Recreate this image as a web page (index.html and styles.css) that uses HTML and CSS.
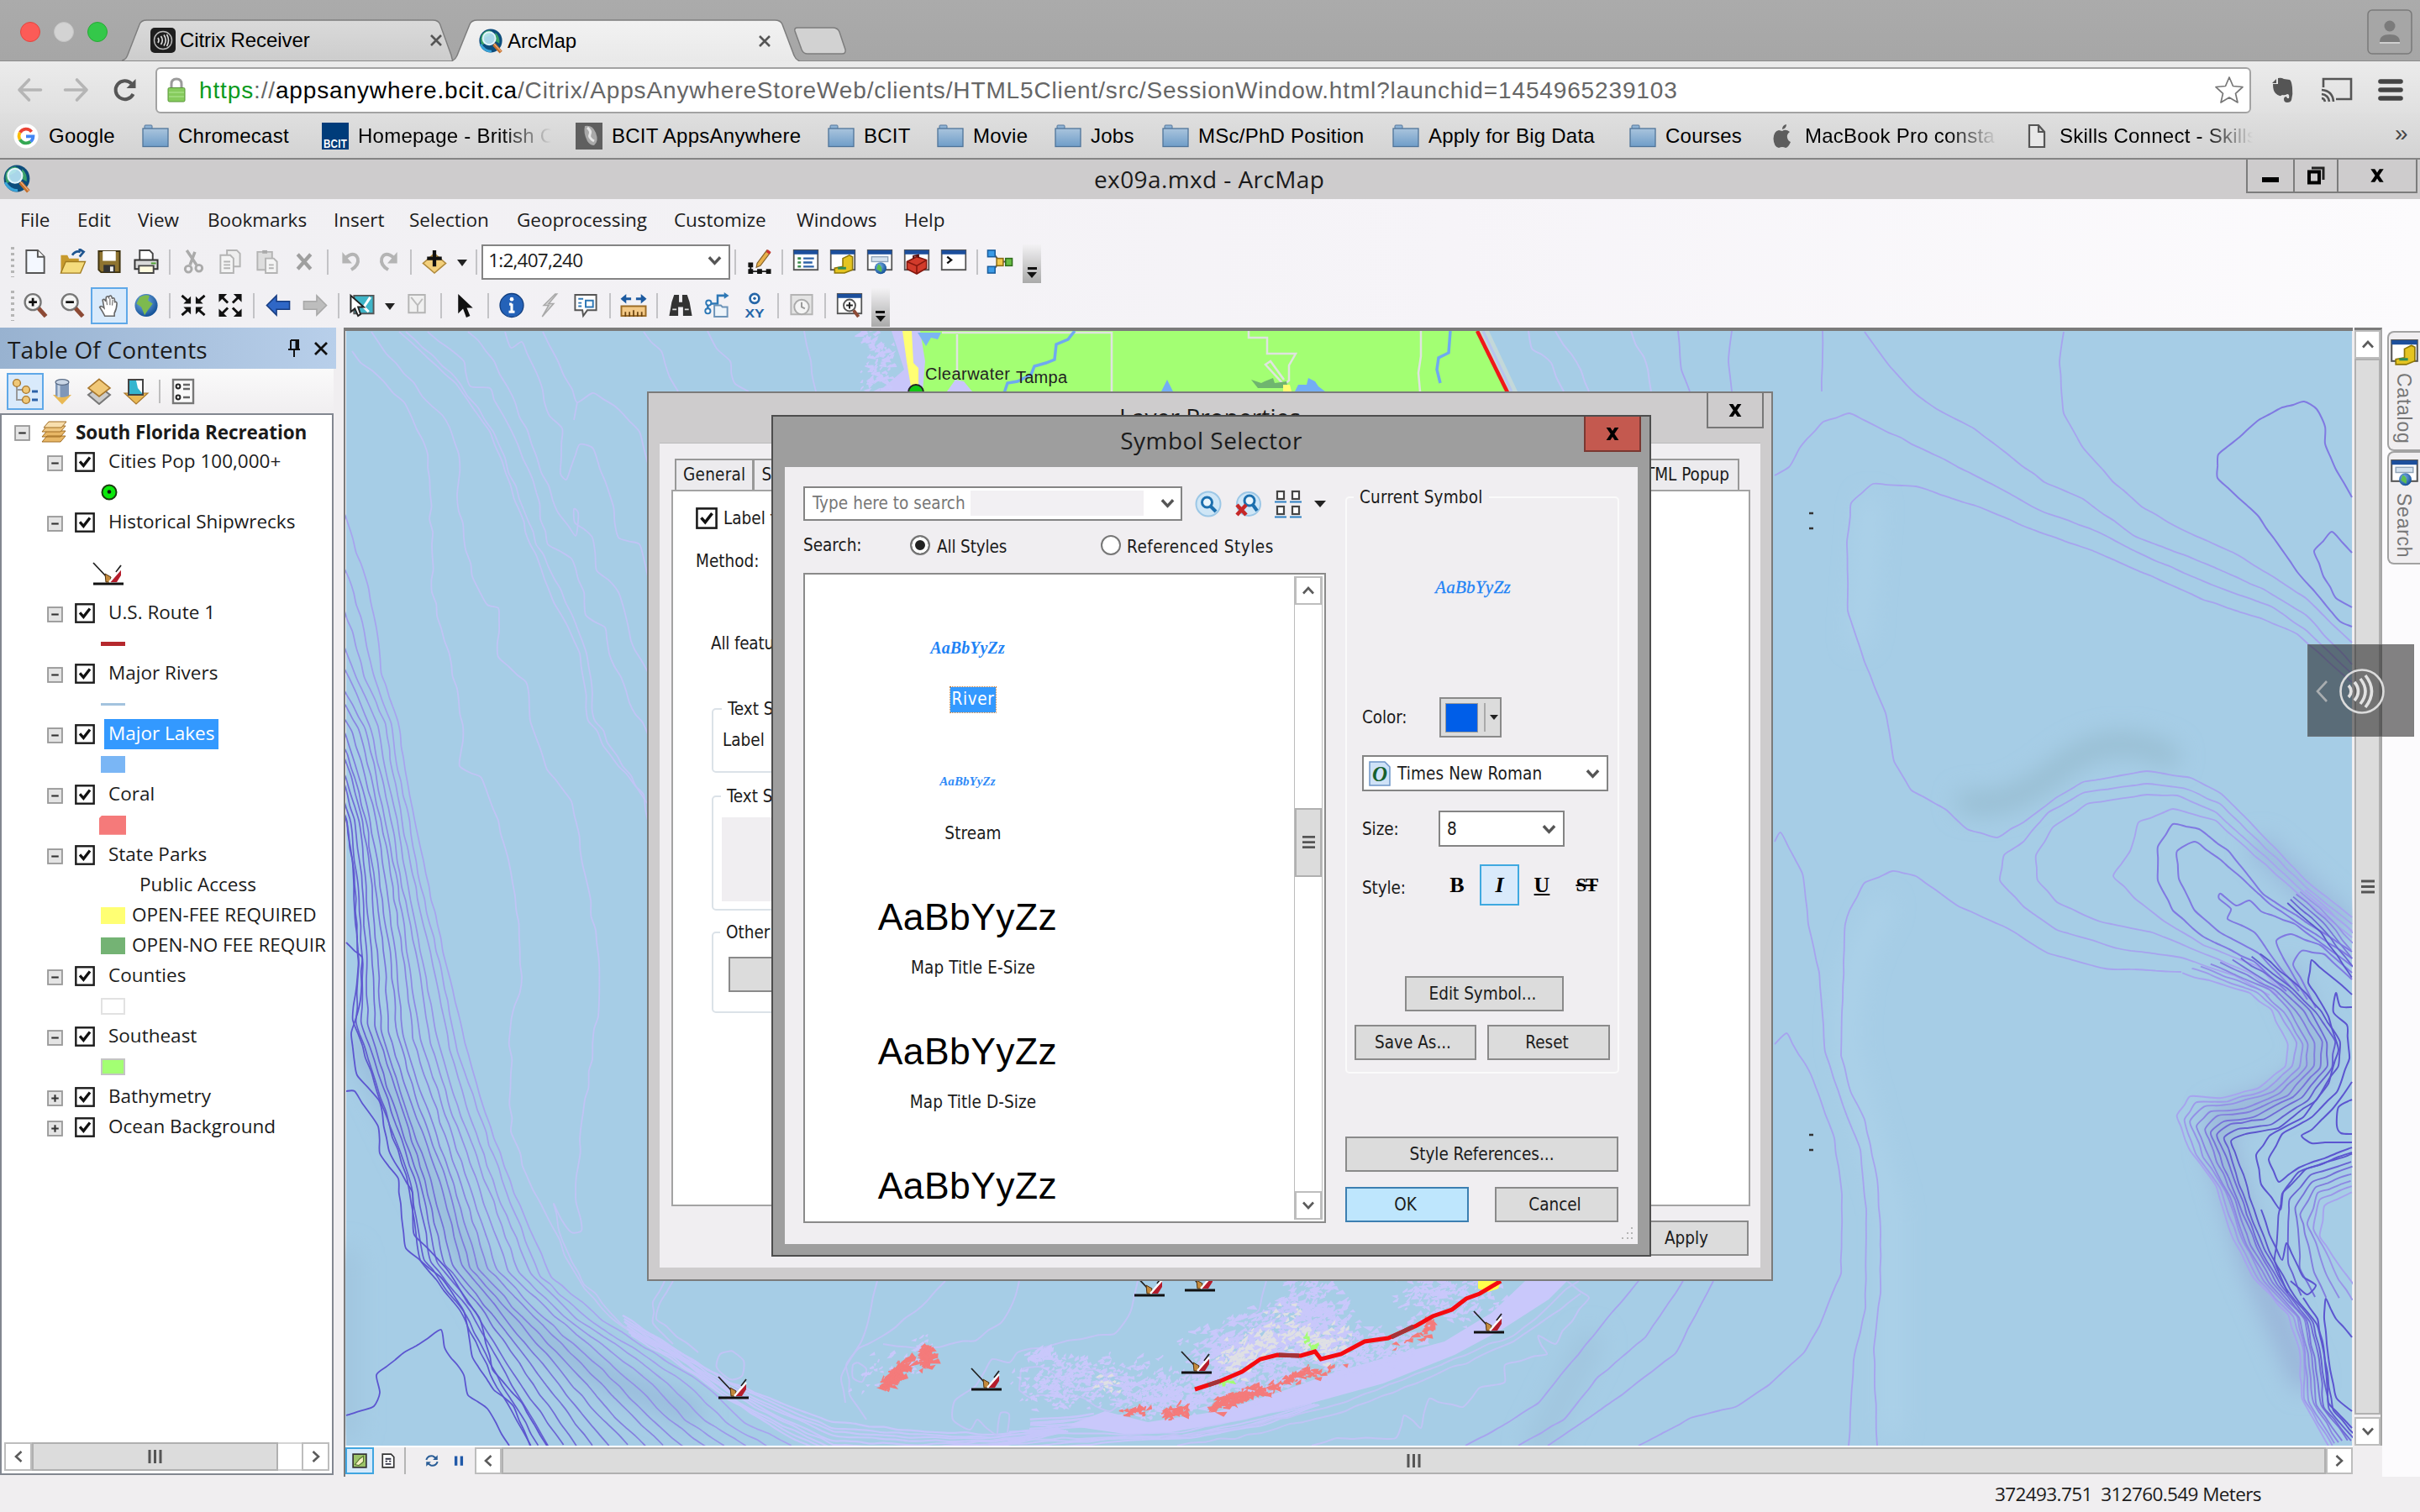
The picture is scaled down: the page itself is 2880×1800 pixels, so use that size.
FILE: index.html
```html
<!DOCTYPE html>
<html lang="en">
<head>
<meta charset="utf-8">
<title>ArcMap</title>
<link rel="stylesheet" href="styles.css">
</head>
<body>
<svg class="defs" width="0" height="0">
  <defs>
    <linearGradient id="folderFill" x1="0" y1="0" x2="0" y2="1"><stop offset="0" stop-color="#a9c4dd"/><stop offset="1" stop-color="#6f9dc8"/></linearGradient>
    <linearGradient id="tabBack" x1="0" y1="0" x2="0" y2="1"><stop offset="0" stop-color="#dadada"/><stop offset="1" stop-color="#cdcdcd"/></linearGradient>
    <linearGradient id="tabFront" x1="0" y1="0" x2="0" y2="1"><stop offset="0" stop-color="#f2f2f2"/><stop offset="1" stop-color="#e9e9e9"/></linearGradient>
    <radialGradient id="globeFill" cx=".4" cy=".35" r=".7"><stop offset="0" stop-color="#7fb4ea"/><stop offset="1" stop-color="#0b4a91"/></radialGradient>
    <symbol id="folder" viewBox="0 0 32 28"><path d="M3 5V2q0-1 1-1h7q1 0 1 1v3" fill="#8fb2d4" stroke="#56799c"/><rect x="1" y="5" width="30" height="21.500" fill="url(#folderFill)" stroke="#4f7499" stroke-width="1.300"/></symbol>
    <symbol id="arcmap" viewBox="0 0 32 32"><ellipse cx="16" cy="15.500" rx="14.500" ry="15" fill="#0d4d7c"/><path d="M4 9q3-6 10-7l4 2-4 5-6 3 2 6-5 3q-3-5-1-12zM22 5q6 5 5 14l-5-3-1-6z" fill="#39a06a"/><path d="M3 20q5 9 14 9" fill="none" stroke="#3aa3d8" stroke-width="3"/><circle cx="14" cy="12.500" r="8" fill="#bfe9f8" fill-opacity=".88" stroke="#e3f4fb" stroke-width="2"/><path d="M20 20l9 10" stroke="#c4702b" stroke-width="4.500"/><path d="M20 19l9 10" stroke="#f3b183" stroke-width="1.200"/></symbol>
    <symbol id="win" viewBox="0 0 16 16"><rect x=".6" y="1" width="14.800" height="12" fill="#fff" stroke="#555"/><rect x=".6" y="1" width="14.800" height="2.500" fill="#1c4f9c"/></symbol>
    <symbol id="minus" viewBox="0 0 18 18"><rect x="1" y="1" width="16" height="16" fill="#e4e4e4" stroke="#9b9b9b" stroke-width="1.800"/><path d="M5 9h8" stroke="#333" stroke-width="2"/></symbol>
    <symbol id="plus" viewBox="0 0 18 18"><rect x="1" y="1" width="16" height="16" fill="#e4e4e4" stroke="#9b9b9b" stroke-width="1.800"/><path d="M5 9h8M9 5v8" stroke="#333" stroke-width="2"/></symbol>
    <symbol id="check" viewBox="0 0 22 22"><rect x="1.200" y="1.200" width="19.600" height="19.600" fill="#fff" stroke="#1c1c1c" stroke-width="2.200"/><path d="M5.500 10.500l4 4.500 7-9" fill="none" stroke="#111" stroke-width="3"/></symbol>
    <symbol id="wreck" viewBox="0 0 38 28"><path d="M1 26h36" stroke="#111" stroke-width="3"/><path d="M1 1l17 18M28 12l6-8" stroke="#222" stroke-width="1.800"/><path d="M15 14l7 4-1 6h-5z" fill="#c48a3c" stroke="#50330f"/><path d="M21 24L34 9v7l-5 8z" fill="#b51d2c"/><path d="M20 24L34 8" stroke="#fff" stroke-width="2.400"/></symbol>
    <symbol id="down" viewBox="0 0 18 12"><path d="M2 2l7 7.500L16 2" fill="none" stroke="#555" stroke-width="3.600"/></symbol>
    <symbol id="chev" viewBox="0 0 16 16"><path d="M2 11.500L8 5l6 6.500" fill="none" stroke="#5b5b5b" stroke-width="2.600"/></symbol>
    <symbol id="lens" viewBox="0 0 16 16"><circle cx="6.500" cy="6" r="4.900" fill="#f4f4f4" stroke="#777" stroke-width="1.200"/><path d="M10 9.800l4.500 5" stroke="#8d4a35" stroke-width="2.600"/></symbol>
    <symbol id="xmark" viewBox="0 0 20 18"><path d="M3 2h4.500L10 5.800 12.500 2H17l-4.800 7L17 16h-4.500L10 12.200 7.500 16H3l4.800-7z" fill="#000"/></symbol>
  </defs>
</svg>

<header class="chrome">
  <div class="tabstrip">
    <div class="lights"><i class="red"></i><i class="gray"></i><i class="green"></i></div>
    <div class="tab back">
      <svg class="tabshape" viewBox="0 0 412 50" preserveAspectRatio="none"><path d="M0 49Q5 48 7 43L22 6Q24 1 31 1H387Q394 1 396 6L410 43Q411 48 412 49" fill="url(#tabBack)" stroke="#7d7d7d" stroke-width="1.500"/></svg>
      <svg class="fav" viewBox="0 0 30 30"><rect width="30" height="30" rx="5" fill="#1e1e1e"/><circle cx="15" cy="15" r="10.500" fill="none" stroke="#bbb" stroke-width="1.400"/><path d="M9 12q2 3 0 6M12.500 10q3.500 5 0 10M16 8.500q4.500 6.500 0 13M19.500 8q4 7 0 14" fill="none" stroke="#ddd" stroke-width="1.600"/></svg>
      <span class="name">Citrix Receiver</span>
      <svg class="x" viewBox="0 0 14 14"><path d="M1 1l12 12M13 1L1 13" stroke="#555" stroke-width="2.600"/></svg>
    </div>
    <div class="tab front">
      <svg class="tabshape" viewBox="0 0 415 50" preserveAspectRatio="none"><path d="M0 50Q5 48 7 43L22 6Q24 1 31 1H385Q392 1 394 6L408 43Q410 48 415 50" fill="url(#tabFront)" stroke="#7d7d7d" stroke-width="1.500"/></svg>
      <svg class="fav"><use href="#arcmap"/></svg>
      <span class="name">ArcMap</span>
      <svg class="x" viewBox="0 0 14 14"><path d="M1 1l12 12M13 1L1 13" stroke="#555" stroke-width="2.600"/></svg>
    </div>
    <svg class="newtab" viewBox="0 0 64 33"><path d="M5 1H47Q53 1 55 6L62 27Q63 32 58 32H17Q12 32 10 27L2 5Q1 1 5 1z" fill="#d2d2d2" stroke="#7d7d7d" stroke-width="1.500"/></svg>
    <svg class="person" viewBox="0 0 54 54"><rect x="1" y="1" width="52" height="52" rx="5" fill="#a6a6a6" stroke="#7a7a7a" stroke-width="1.500"/><circle cx="27" cy="20" r="6.500" fill="#7b7b7b"/><path d="M15 39q0-9 12-9t12 9z" fill="#7b7b7b"/><path d="M15 40h24" stroke="#ddd" stroke-width="1.500"/></svg>
  </div>
  <div class="addressbar">
    <svg class="nav" viewBox="0 0 30 30"><path d="M28 15H3M14 3L2.500 15 14 27" fill="none" stroke="#b5b5b5" stroke-width="3.600" stroke-linecap="round" stroke-linejoin="round"/></svg>
    <svg class="nav fwd" viewBox="0 0 30 30"><path d="M2 15h25M16 3l11.500 12L16 27" fill="none" stroke="#b5b5b5" stroke-width="3.600" stroke-linecap="round" stroke-linejoin="round"/></svg>
    <svg class="nav reload" viewBox="0 0 30 30"><path d="M25 20A11 11 0 1 1 23 7.500" fill="none" stroke="#555" stroke-width="4"/><path d="M28 2v11H17z" fill="#555"/></svg>
    <div class="url">
      <svg class="lock" viewBox="0 0 22 30"><path d="M5 14V8q0-6 6-6t6 6v6" fill="none" stroke="#9b9b9b" stroke-width="3"/><rect x="1" y="12.500" width="20" height="16.500" rx="1.500" fill="#86cb5d" stroke="#58953a"/><path d="M2 18h18M2 23h18" stroke="#a5de84" stroke-width="1.500"/></svg>
      <span class="addr"><b class="sec">https</b>://<b class="host">appsanywhere.bcit.ca</b>/Citrix/AppsAnywhereStoreWeb/clients/HTML5Client/src/SessionWindow.html?launchid=1454965239103</span>
      <svg class="star" viewBox="0 0 36 34"><path d="M18 2l4.500 10.500L34 13.500l-8.500 7.800L28 32l-10-6-10 6 2.500-10.700L2 13.500l11.500-1z" fill="#fff" stroke="#777" stroke-width="1.700" stroke-linejoin="round"/></svg>
    </div>
    <svg class="ext ever" viewBox="0 0 27 30"><path d="M8 1q4-1 7 1l7 1q2 1 3 9t-1 15q-1 3-5 3t-4-4q0-3 3-3l1 2h2q1-5-2-5-3 2-6 1-3 3-8-2-3-3-3-11h6z" fill="#555"/><path d="M1 7l5-5v5z" fill="#555"/></svg>
    <svg class="ext cast" viewBox="0 0 38 30"><path d="M3 12V2H36V26H18" fill="none" stroke="#555" stroke-width="2.600"/><path d="M1 15q13 1 14 14M1 20q8 1 9 9M1 25q3 0 4 4" fill="none" stroke="#555" stroke-width="2.600"/></svg>
    <svg class="ext menu" viewBox="0 0 30 28"><path d="M3 4h24M3 14h24M3 24h24" stroke="#444" stroke-width="5.600" stroke-linecap="round"/></svg>
  </div>
  <nav class="bookmarks">
    <a><svg viewBox="0 0 32 32"><circle cx="16" cy="16" r="15.500" fill="#fff"/><path d="M23 10.500A9 9 0 0 0 8.300 11.500" fill="none" stroke="#ea4335" stroke-width="4"/><path d="M8.300 11.500A9 9 0 0 0 8.300 20.500" fill="none" stroke="#fbbc05" stroke-width="4"/><path d="M8.300 20.500A9 9 0 0 0 21.800 23" fill="none" stroke="#34a853" stroke-width="4"/><path d="M16 16.500h9A9 9 0 0 1 21.800 23" fill="none" stroke="#4285f4" stroke-width="4"/></svg><span>Google</span></a>
    <a><svg><use href="#folder"/></svg><span>Chromecast</span></a>
    <a><svg class="full" viewBox="0 0 32 32"><rect width="32" height="32" fill="#003c7a"/><text x="2" y="30" class="bcit" textLength="28" lengthAdjust="spacingAndGlyphs">BCIT</text></svg><span class="fade">Homepage - British C</span></a>
    <a><svg class="full" viewBox="0 0 32 32"><rect width="32" height="32" fill="#5f5f5f"/><path d="M11 4q9-2 13 8t-2 15q-5 0-8-5Q9 12 11 4z" fill="#a9a9a9"/><path d="M14 6q5 4 3 8t5 8" stroke="#e6e6e6" stroke-width="3" fill="none"/></svg><span>BCIT AppsAnywhere</span></a>
    <a><svg><use href="#folder"/></svg><span>BCIT</span></a>
    <a><svg><use href="#folder"/></svg><span>Movie</span></a>
    <a><svg><use href="#folder"/></svg><span>Jobs</span></a>
    <a><svg><use href="#folder"/></svg><span>MSc/PhD Position</span></a>
    <a><svg><use href="#folder"/></svg><span>Apply for Big Data</span></a>
    <a><svg><use href="#folder"/></svg><span>Courses</span></a>
    <a><svg viewBox="0 0 32 28"><path d="M16 8q4-3 9 1-4 3-3 7 1 4 4 5-3 7-6 7-2-1-4-1t-4 1q-6-1-6.500-11Q6 8 12 7z" fill="#5d5d5d"/><path d="M16 6q0-5 5-6 0 5-5 6z" fill="#5d5d5d"/></svg><span class="fade">MacBook Pro consta</span></a>
    <a><svg viewBox="0 0 32 28"><path d="M7 1H18l7 8V27H7zM18 1v8h7" fill="#e8e8e8" stroke="#555" stroke-width="2.200"/></svg><span class="fade">Skills Connect - Skills</span></a>
    <b class="more">»</b>
  </nav>
</header>

<main class="app">
  <div class="titlebar">
    <svg class="appicon"><use href="#arcmap"/></svg>
    <h1>ex09a.mxd - ArcMap</h1>
    <div class="winbtns">
      <span><svg width="22" height="20" viewBox="0 0 22 20"><path d="M1 15h20" stroke="#000" stroke-width="6"/></svg></span>
      <span><svg width="22" height="22" viewBox="0 0 22 22"><path d="M6 2h14v14" fill="none" stroke="#222" stroke-width="3"/><rect x="3" y="6.500" width="12" height="13" fill="none" stroke="#000" stroke-width="4"/></svg></span>
      <span><svg width="22" height="20"><use href="#xmark"/></svg></span>
    </div>
  </div>
  <nav class="menubar"><span>File</span><span>Edit</span><span>View</span><span>Bookmarks</span><span>Insert</span><span>Selection</span><span>Geoprocessing</span><span>Customize</span><span>Windows</span><span>Help</span></nav>

  <div class="toolbar one">
    <i class="grip"></i>
    <svg viewBox="0 0 16 16"><path d="M2.500 1h7l4 4v10h-11z" fill="#f4f8ff" stroke="#555"/><path d="M9.500 1v4h4" fill="#fff" stroke="#555"/></svg>
    <svg viewBox="0 0 16 16"><path d="M1 15V4h4l1 2h6v9z" fill="#c79a2d"/><path d="M1 15l3-7h12l-3 7z" fill="#f5dc7d" stroke="#a17b1e" stroke-width=".7"/><path d="M8 4q2-3 5-2M12 0l3 2-2.500 3" fill="none" stroke="#1e5590" stroke-width="1.400"/></svg>
    <svg viewBox="0 0 16 16"><path d="M1.500 1.500h13v13H3l-1.500-1.500z" fill="#8f7430" stroke="#3f3310"/><rect x="4" y="1.500" width="8" height="6" fill="#fff"/><path d="M4.500 10h7v4.500h-7z" fill="#333"/><rect x="8.500" y="11" width="2" height="3" fill="#eee"/></svg>
    <svg viewBox="0 0 16 16"><path d="M4 8V1h6l2 2v5z" fill="#fff" stroke="#444"/><path d="M1 7h14v5.500H1z" fill="#d9d9d9" stroke="#333"/><path d="M3.500 10.500h9V15h-9z" fill="#fffbe0" stroke="#444"/><path d="M11 9h3" stroke="#4da030"/></svg>
    <i class="sep"></i>
    <svg class="off" viewBox="0 0 16 16"><path d="M4 1l6 9M9 2L6 10" stroke="#aaa" stroke-width="1.800" fill="none"/><circle cx="5" cy="12.500" r="2" fill="none" stroke="#aaa" stroke-width="1.500"/><circle cx="11.500" cy="12" r="2" fill="none" stroke="#aaa" stroke-width="1.500"/></svg>
    <svg class="off" viewBox="0 0 16 16"><path d="M6 1h6l2 2v8H6z" fill="#eee" stroke="#b4b4b4"/><path d="M2 4h6l2 2v9H2z" fill="#f4f4f4" stroke="#b4b4b4"/><path d="M4 8h4M4 10h4M4 12h4" stroke="#b4b4b4"/></svg>
    <svg class="off" viewBox="0 0 16 16"><path d="M2 2h9v11H2z" fill="#ddd" stroke="#b4b4b4"/><path d="M5 1h3v2H5z" fill="#aaa"/><path d="M7 6h5l2 2v7H7z" fill="#f4f4f4" stroke="#b4b4b4"/><path d="M9 10h3M9 12h3" stroke="#b4b4b4"/></svg>
    <svg class="off" viewBox="0 0 16 16"><path d="M4 3.500l8 9M12 3.500l-8 9" stroke="#9f9f9f" stroke-width="2.200"/></svg>
    <i class="sep"></i>
    <svg class="off" viewBox="0 0 16 16"><path d="M4 6q6-5 8 0 1 4-4 7" fill="none" stroke="#b4b4b4" stroke-width="2"/><path d="M2.500 2v7h6z" fill="#b4b4b4"/></svg>
    <svg class="off" viewBox="0 0 16 16"><path d="M12 6q-6-5-8 0-1 4 4 7" fill="none" stroke="#b4b4b4" stroke-width="2"/><path d="M13.500 2v7h-6z" fill="#b4b4b4"/></svg>
    <i class="sep"></i>
    <svg viewBox="0 0 16 16"><path d="M8 3l7 6-7 6-7-6z" fill="#f3d07c" stroke="#b08a3c" stroke-width=".8"/><path d="M8 1v10M3.500 6h9" stroke="#111" stroke-width="2.200"/></svg>
    <i class="tri"></i>
    <i class="sep"></i>
    <div class="combo scale"><span>1:2,407,240</span><svg><use href="#down"/></svg></div>
    <i class="sep"></i>
    <svg viewBox="0 0 16 16"><path d="M3 10v4h10" fill="none" stroke="#222"/><path d="M1.500 8.500h3v3h-3zM1.500 12.500h3v3h-3zM7 12.500h3v3H7zM12.500 12.500h3v3h-3z" fill="#111"/><path d="M7 9l6-8 2 1.500-6 8-2.500 1z" fill="#e8b04a" stroke="#85612a" stroke-width=".6"/><path d="M12.500 2l1-1.500 2 1.500-1 1.500z" fill="#c33"/></svg>
    <i class="sep"></i>
    <svg viewBox="0 0 16 16"><use href="#win"/><path d="M3 6h2M3 8.500h2M3 11h2" stroke="#3a8a4b" stroke-width="1.300"/><path d="M6.500 6H13M6.500 8.500H12M6.500 11H13" stroke="#2d62a8" stroke-width="1.200"/></svg>
    <svg viewBox="0 0 16 16"><use href="#win"/><path d="M8 6l4-2 2 1v8l-5 2-6 0v-3l5-1z" fill="#e4c421" stroke="#8d7607" stroke-width=".8"/><path d="M5 12h5" stroke="#2e8b57" stroke-width="1.500"/></svg>
    <svg viewBox="0 0 16 16"><use href="#win"/><rect x="3" y="5" width="10" height="3" fill="#d5e2ee" stroke="#90a4b8" stroke-width=".7"/><circle cx="8.500" cy="12" r="3.600" fill="url(#globeFill)"/><path d="M7 9.500q3 1 2 5l-3-2z" fill="#5cbf4f"/></svg>
    <svg viewBox="0 0 16 16"><use href="#win"/><path d="M2 8l6-3 6 2v5l-6 3.500-6-3z" fill="#d23b2b" stroke="#84170e" stroke-width=".8"/><path d="M2 8l6 2.500L14 7M8 10.500v5" fill="none" stroke="#84170e" stroke-width=".8"/><path d="M6 6V4.500l3-.5v1.500" fill="none" stroke="#511"/></svg>
    <svg viewBox="0 0 16 16"><use href="#win"/><path d="M4 5l2.500 2L4 9" fill="none" stroke="#111" stroke-width="1.200"/></svg>
    <i class="sep"></i>
    <svg viewBox="0 0 16 16"><path d="M4 3l4 5-4 5M8 8h5" stroke="#555" fill="none"/><rect x=".5" y="1" width="4.500" height="4" fill="#3c9be6" stroke="#1a5d9d" stroke-width=".8"/><rect x=".5" y="11" width="4.500" height="4" fill="#3c9be6" stroke="#1a5d9d" stroke-width=".8"/><rect x="6" y="6" width="4" height="4.500" fill="#f2c84b" stroke="#8c6c14" stroke-width=".8"/><rect x="11.500" y="6" width="4" height="4.500" fill="#69bd45" stroke="#2f6d1b" stroke-width=".8"/></svg>
    <i class="overflow"></i>
  </div>

  <div class="toolbar two">
    <i class="grip"></i>
    <svg viewBox="0 0 16 16"><use href="#lens"/><path d="M6.500 3.500v5M4 6h5" stroke="#111" stroke-width="1.400"/></svg>
    <svg viewBox="0 0 16 16"><use href="#lens"/><path d="M4 6h5" stroke="#111" stroke-width="1.400"/></svg>
    <svg class="on" viewBox="0 0 16 16"><path d="M5 15Q3 11 1.500 9q1-1.500 3 .5L3.500 4q1.300-1 2 1L6 2q1.200-1 1.700.3L8 1.500q1.300-1 1.700.5l.3 1q1.300-.8 1.600.5l.2 2q1.400-.5 1.400 1-.2 4-1.700 6.500v2z" fill="#fff" stroke="#666" stroke-width=".9"/><path d="M6 3.500l.6 4M8.500 3v4.500M10.400 4L10 7.800" stroke="#777" stroke-width=".7"/></svg>
    <svg viewBox="0 0 16 16"><circle cx="8" cy="8" r="7" fill="url(#globeFill)"/><path d="M4 3q3-2 6-1l-1 3 3 2-3 4-2 3-2-5-3-2z" fill="#7dba4e"/></svg>
    <i class="sep"></i>
    <svg viewBox="0 0 16 16"><path d="M1 2l4 3.500M15 2l-4 3.500M1 14l4-3.500M15 14l-4-3.500" stroke="#111" stroke-width="1.500"/><path d="M6.500 2.500V7H2zM9.500 2.500V7H14zM6.500 13.500V9H2zM9.500 13.500V9H14z" fill="#111"/></svg>
    <svg viewBox="0 0 16 16"><path d="M6.500 6.500L2 2M9.500 6.500L14 2M6.500 9.500L2 14M9.500 9.500L14 14" stroke="#111" stroke-width="1.500"/><path d="M1 1h5L1 6zM15 1h-5l5 5zM1 15h5l-5-5zM15 15h-5l5-5z" fill="#111"/></svg>
    <i class="sep"></i>
    <svg viewBox="0 0 16 16"><path d="M1 8l6-6v3.500h8v5H7V14z" fill="#2f67c6" stroke="#173c80" stroke-width=".8"/></svg>
    <svg viewBox="0 0 16 16"><path d="M15 8L9 2v3.500H1v5h8V14z" fill="#bdbdbd" stroke="#a8a8a8" stroke-width=".8"/></svg>
    <i class="sep"></i>
    <svg viewBox="0 0 16 16"><path d="M3 2h12v11H3z" fill="#3fb5c8" stroke="#555"/><path d="M13 3L9 9l3 3" fill="none" stroke="#fff" stroke-width="1.600"/><path d="M1 2v10l2.500-2 2 4.500 1.500-1L5.500 9H9z" fill="#fff" stroke="#222"/></svg>
    <i class="tri"></i>
    <svg class="off" viewBox="0 0 16 16"><path d="M2.500 1.500h10v11h-10z" fill="#f0f0f0" stroke="#b4b4b4"/><path d="M4 3l4 5 3-4M8 8v4" fill="none" stroke="#bbb"/></svg>
    <i class="sep"></i>
    <svg viewBox="0 0 16 16"><path d="M4 1v12l3-3 2 5.500 2.300-1L9.300 9.500H13z" fill="#111"/></svg>
    <i class="sep"></i>
    <svg viewBox="0 0 16 16"><circle cx="8" cy="8" r="7.200" fill="#2462b8" stroke="#123f80" stroke-width=".7"/><path d="M8 7v5M6.500 7.300H8M6.200 12h3.600" stroke="#fff" stroke-width="1.600"/><circle cx="8" cy="4.200" r="1.200" fill="#fff"/></svg>
    <svg class="off" viewBox="0 0 16 16"><path d="M12 1L5 8h3l-4 7 7-8H8l5-6z" fill="#d9d9d9" stroke="#a9a9a9" stroke-width=".8"/></svg>
    <svg viewBox="0 0 16 16"><path d="M1.500 1.500h13v9.500H9l-2.500 3.500L6 11H1.500z" fill="#fff" stroke="#555"/><path d="M3.500 4h3M3.500 6.500h2M3.500 8.500h2" stroke="#2d77b5"/><path d="M8 5h4.500v4H8z" fill="none" stroke="#2d77b5"/></svg>
    <i class="sep"></i>
    <svg viewBox="0 0 16 16"><path d="M1 4h5.500M9.500 4H15" stroke="#1c5aa0" stroke-width="1.600"/><path d="M0 4l3.500-3v6zM16 4l-3.500-3v6z" fill="#1c5aa0"/><rect x=".5" y="8.500" width="15" height="6" fill="#f3c987" stroke="#9a6a24"/><path d="M3 15v-3M5.500 15v-3M8 15v-4M10.500 15v-3M13 15v-3" stroke="#6b4512" stroke-width=".9"/></svg>
    <i class="sep"></i>
    <svg viewBox="0 0 16 16"><path d="M2.500 6L4 1.500h3V6h2V1.500h3L13.500 6 15 14.500h-5.500V9h-3v5.500H1z" fill="#333"/><path d="M3 10.500h2.500M10.500 10.500H13" stroke="#ddd"/></svg>
    <svg viewBox="0 0 16 16"><path d="M2 13V7h6V2h5" fill="none" stroke="#2d77b5" stroke-width="1.300"/><path d="M12 0l3 2-3 2z" fill="#2d77b5"/><circle cx="2" cy="11.500" r="1.600" fill="#fff" stroke="#2d77b5"/><circle cx="2.500" cy="6.500" r="1.600" fill="#fff" stroke="#2d77b5"/><path d="M6 8h4l1 1h3v6H6z" fill="#eef4fa" stroke="#6c93b8"/></svg>
    <svg viewBox="0 0 16 16"><circle cx="8" cy="3.800" r="2.800" fill="#fff" stroke="#2566a8" stroke-width="1.400"/><circle cx="8" cy="3.800" r=".9" fill="#2566a8"/><text x="2" y="15.400" class="xy" textLength="12" lengthAdjust="spacingAndGlyphs">XY</text></svg>
    <i class="sep"></i>
    <svg class="off" viewBox="0 0 16 16"><path d="M1.500 1.500h13v12h-13z" fill="#e4e4e4" stroke="#b4b4b4"/><circle cx="8" cy="9" r="4.500" fill="#f4f4f4" stroke="#aaa"/><path d="M8 6v3l2 1" fill="none" stroke="#999"/></svg>
    <i class="sep"></i>
    <svg viewBox="0 0 16 16"><use href="#win"/><circle cx="8" cy="8" r="3.600" fill="#fff" stroke="#555"/><path d="M8 6v4M6 8h4" stroke="#222"/><path d="M10.500 11l3 4" stroke="#8d4a35" stroke-width="2"/></svg>
    <i class="overflow"></i>
  </div>

  <div class="workspace">
    <aside class="toc">
      <div class="tochead"><h2>Table Of Contents</h2>
        <svg width="18" height="24" viewBox="0 0 18 24"><path d="M5 2h9v11M5 2v11M2 13h14M9 13v9" fill="none" stroke="#111" stroke-width="2"/><path d="M12 2v11" stroke="#111" stroke-width="3"/></svg>
        <svg width="18" height="18" viewBox="0 0 18 18"><path d="M2 2l14 14M16 2L2 16" stroke="#111" stroke-width="2.800"/></svg></div>
      <div class="toctools">
        <span class="on"><svg viewBox="0 0 16 16"><path d="M3 5v8h5M3 7h5" fill="none" stroke="#999"/><circle cx="3" cy="3" r="2.200" fill="#f0c878" stroke="#a8772c" stroke-width=".7"/><circle cx="8.500" cy="7" r="2.200" fill="#f0c878" stroke="#a8772c" stroke-width=".7"/><circle cx="8.500" cy="13" r="2.200" fill="#f0c878" stroke="#a8772c" stroke-width=".7"/><path d="M12 8h3.500M12 13h3.500" stroke="#2d62a8" stroke-width="1.600"/></svg></span>
        <span><svg viewBox="0 0 16 16"><path d="M2.500 10l5.500 5.700 5.500-5.700z" fill="#e9b955"/><path d="M4 2.500h8v8q-4 2-8 0z" fill="#7f97b8"/><path d="M6 3.500v8" stroke="#c9d6e6" stroke-width="1.500"/><ellipse cx="8" cy="2.500" rx="4" ry="1.700" fill="#c9d6e6" stroke="#5a6c86" stroke-width=".6"/></svg></span>
        <span><svg viewBox="0 0 16 16"><path d="M8 5l6.500 5L8 15.500 1.500 10z" fill="#ccc" stroke="#777"/><path d="M8 .7L14.500 6 8 11 1.500 6z" fill="#f0c878" stroke="#a8772c" stroke-width=".8"/></svg></span>
        <span><svg viewBox="0 0 16 16"><path d="M1 9l7 6.500L15 9z" fill="#e9b955" stroke="#a8772c" stroke-width=".6"/><rect x="3.500" y="1" width="8.500" height="9" fill="#35b5cf" stroke="#444"/><path d="M8 1.500h3.500V9L9 6z" fill="#fff"/></svg></span>
        <i class="sep"></i>
        <span><svg viewBox="0 0 16 16"><rect x="2" y="1" width="12" height="14" fill="#fafafa" stroke="#777" stroke-width="1.200"/><circle cx="5" cy="5" r="1.200" fill="none" stroke="#222"/><circle cx="5" cy="11.500" r="1.200" fill="none" stroke="#222"/><path d="M8 4h4M8 6.500h4M8 11.500h4" stroke="#666" stroke-width="1.200"/></svg></span>
      </div>
      <div class="tree">
        <ul>
          <li class="root"><svg class="pm"><use href="#minus"/></svg><svg class="stack" viewBox="0 0 32 26"><path d="M8 18h22l-6 7H2zM8 12h22l-6 7H2z" fill="#e8b766" stroke="#a06c22"/><path d="M8 6h22l-6 7H2z" fill="#efc680" stroke="#a06c22"/><path d="M10 1h21l-6 7H4z" fill="#f8dfae" stroke="#a06c22"/></svg><b>South Florida Recreation</b></li>
          <li><svg class="pm"><use href="#minus"/></svg><svg class="cb"><use href="#check"/></svg><span>Cities Pop 100,000+</span></li>
          <li class="sym"><svg width="20" height="20" viewBox="0 0 20 20"><circle cx="10" cy="10" r="8.500" fill="#0be80b" stroke="#1b3a10" stroke-width="2"/><circle cx="10" cy="9.500" r="2.300" fill="#111"/></svg></li>
          <li><svg class="pm"><use href="#minus"/></svg><svg class="cb"><use href="#check"/></svg><span>Historical Shipwrecks</span></li>
          <li class="sym ship"><svg width="38" height="28"><use href="#wreck"/></svg></li>
          <li><svg class="pm"><use href="#minus"/></svg><svg class="cb"><use href="#check"/></svg><span>U.S. Route 1</span></li>
          <li class="sym"><i class="line route"></i></li>
          <li><svg class="pm"><use href="#minus"/></svg><svg class="cb"><use href="#check"/></svg><span>Major Rivers</span></li>
          <li class="sym"><i class="line river"></i></li>
          <li><svg class="pm"><use href="#minus"/></svg><svg class="cb"><use href="#check"/></svg><span class="sel">Major Lakes</span></li>
          <li class="sym"><i class="sw lake"></i></li>
          <li><svg class="pm"><use href="#minus"/></svg><svg class="cb"><use href="#check"/></svg><span>Coral</span></li>
          <li class="sym"><i class="sw coral"></i></li>
          <li><svg class="pm"><use href="#minus"/></svg><svg class="cb"><use href="#check"/></svg><span>State Parks</span></li>
          <li class="heading"><span>Public Access</span></li>
          <li class="sym"><i class="sw fee"></i><span>OPEN-FEE REQUIRED</span></li>
          <li class="sym"><i class="sw nofee"></i><span>OPEN-NO FEE REQUIR</span></li>
          <li><svg class="pm"><use href="#minus"/></svg><svg class="cb"><use href="#check"/></svg><span>Counties</span></li>
          <li class="sym"><i class="sw county"></i></li>
          <li><svg class="pm"><use href="#minus"/></svg><svg class="cb"><use href="#check"/></svg><span>Southeast</span></li>
          <li class="sym"><i class="sw southeast"></i></li>
          <li><svg class="pm"><use href="#plus"/></svg><svg class="cb"><use href="#check"/></svg><span>Bathymetry</span></li>
          <li><svg class="pm"><use href="#plus"/></svg><svg class="cb"><use href="#check"/></svg><span>Ocean Background</span></li>
        </ul>
        <div class="hscroll">
          <i class="btn"><svg class="left"><use href="#chev"/></svg></i><i class="thumb"><svg width="18" height="16" viewBox="0 0 18 16"><path d="M2 0v16M8.500 0v16M15 0v16" stroke="#555" stroke-width="3"/></svg></i><i class="track"></i><i class="btn"><svg class="right"><use href="#chev"/></svg></i>
        </div>
      </div>
    </aside>

    <section class="mapcol">
      <svg id="map" class="map" viewBox="411 394 2387 1327">
        <defs><filter id="soft" x="-50%" y="-50%" width="200%" height="200%"><feGaussianBlur stdDeviation="14"/></filter></defs>
        <rect x="411" y="394" width="2387" height="1327" fill="#a6cde6"/>
        <g filter="url(#soft)" fill="none" stroke-linecap="round">
          <path d="M2340 955Q2390 965 2450 915T2580 900" stroke="#98bdd1" stroke-width="26"/>
          <path d="M2640 1330Q2760 1300 2760 1240M2640 1360L2680 1500 2740 1640" stroke="#99b4d8" stroke-width="30"/>
          <path d="M2690 1010L2790 1100M2720 1160L2760 1250" stroke="#99b8da" stroke-width="26"/>
          <path d="M430 1240L520 1430 590 1560 720 1640 820 1680" stroke="#98bbdb" stroke-width="30"/>
          <path d="M2225 600L2212 760M2240 1080Q2190 1160 2200 1260L2250 1440V1700" stroke="#aed3ea" stroke-width="18"/>
          <path d="M1890 1600L1830 1720M411 1500V1700" stroke="#a0c5de" stroke-width="30"/>
        </g>
        <g id="contours" fill="none" stroke-linejoin="round"></g>
        <g class="florida">
          <path d="M1060 394H1120L1130 466H1045L1075 440z" fill="#c9c6fa"/>
          <path d="M1094 394H1757L1792 466H1097L1100 430z" fill="#a3ff73"/>
          <path d="M1757 394h14l34 72h-13z" fill="#c3d8d9"/><path d="M1764 394l34 72" stroke="#b6c6ef" stroke-width="3"/>
          <path d="M1073 394h11l2 38 6 6v28h-8l-6-36z" fill="#ffff73"/>
          <path d="M1091 396h28l-4 8-8-2-6 10z" fill="#7cb5f2"/>
          <path d="M1138 398V446M1120 396H1322V466M1485 394v8h22V421h34l-8 14 0 18-6 5-22-24 6-4 16 22M1690 394v30l-3 20 2 22" fill="none" stroke="#dfe3df" stroke-width="2.500"/>
          <path d="M1278 394l-8 10-14 6-2 18-10 4-14 4-4 10-16 8-12 2-4 12M1725 394l-2 26-12 6-2 14 4 16" fill="none" stroke="#6fa9f0" stroke-width="3.500"/>
          <path d="M1381 466l7-14 7 14zM1540 466l4-8 10 0 2-8 8 4 4 6 8 6z" fill="#73aef5"/>
          <path d="M1488 452l12 4 4-2 10-4 2 6 14-2 2 8h-36z" fill="#6fb56f"/><path d="M1526 458h8l2 8h-10z" fill="#ffff73"/>
          <path d="M1126 466l10-14 10 2 10 12z" fill="#c9c6fa"/>
          <path d="M1757 394l36 73" stroke="#f01818" stroke-width="4.500"/>
          <circle cx="1089" cy="467" r="9" fill="#13c613" stroke="#222" stroke-width="2"/>
          <text x="1100" y="452" class="city" textLength="101">Clearwater</text><text x="1208" y="456" class="city" textLength="61">Tampa</text>
        </g>
        <path d="M1269 1697L1337 1707 1393 1705 1477 1690 1561 1670 1645 1647 1730 1613 1786 1583 1842 1547 1864 1525H1814L1774 1563 1718 1597 1645 1617 1589 1633 1522 1657 1449 1680 1365 1693 1314 1680z" fill="#c9c8fb"/>
        <g id="speckles"></g>
        <path d="M1758 1524h28l-4 10-12 4-12-4z" fill="#ffff4d"/>
        <polyline points="1421,1654 1449,1645 1477,1633 1499,1618 1519,1613 1547,1614 1564,1609 1571,1618 1595,1612 1623,1597 1651,1593 1685,1578 1704,1567 1727,1559 1744,1546 1760,1540 1785,1525" fill="none" stroke="#f50a0f" stroke-width="5"/>
        <path d="M1437 1649l14-5M1521 1613l24 1M1655 1592l26-13" stroke="#a33338" stroke-width="5"/>
        <use href="#wreck" x="853" y="1638" width="38" height="28"/><use href="#wreck" x="1154" y="1628" width="38" height="28"/><use href="#wreck" x="1404" y="1608" width="38" height="28"/><use href="#wreck" x="1752" y="1560" width="38" height="28"/><use href="#wreck" x="1348" y="1516" width="38" height="28"/><use href="#wreck" x="1408" y="1510" width="38" height="28"/>
        <path d="M2152 611h5M2152 629h5M2152 1351h5M2152 1369h5" stroke="#333" stroke-width="2.500"/>
      </svg>
      <div class="mapfoot">
        <i class="view on"><svg viewBox="0 0 16 16"><rect x="1" y="1" width="14" height="14" fill="#9cc46a" stroke="#333" stroke-width="1.500"/><path d="M3 12L8 6l4-3v6l-5 4z" fill="#f3f0c2" stroke="#55752e"/></svg></i>
        <i class="view"><svg viewBox="0 0 16 16"><path d="M2 1h9l3 3v11H2z" fill="#fff" stroke="#333" stroke-width="1.500"/><path d="M5 6h6M5 8.500h2M9 8.500h2M5 11.500h6" stroke="#334" stroke-width="1.600"/></svg></i>
        <i class="view wide"><svg viewBox="0 0 16 16"><path d="M2 7q2-5 7-4l3 2M14 9q-2 5-7 4l-3-2" fill="none" stroke="#2a5d96" stroke-width="1.800"/><path d="M14 2v5H9zM2 14V9h5z" fill="#2a5d96"/></svg></i>
        <i class="view"><svg viewBox="0 0 16 16"><path d="M5 3v10M11 3v10" stroke="#2059a8" stroke-width="3"/></svg></i>
        <i class="btn"><svg class="left"><use href="#chev"/></svg></i><i class="thumb"><svg width="18" height="16" viewBox="0 0 18 16"><path d="M2 0v16M8.500 0v16M15 0v16" stroke="#555" stroke-width="3"/></svg></i><i class="btn"><svg class="right"><use href="#chev"/></svg></i>
      </div>
    </section>

    <div class="vscroll"><i class="btn"><svg><use href="#chev"/></svg></i><i class="thumb"><svg width="16" height="18" viewBox="0 0 16 18"><path d="M0 2h16M0 8.500h16M0 15h16" stroke="#555" stroke-width="3"/></svg></i><i class="btn"><svg class="dn"><use href="#chev"/></svg></i></div>

    <aside class="dock">
      <div class="docktab catalog"><svg viewBox="0 0 16 16"><use href="#win"/><path d="M8 6l4-2 2 1v8l-5 2-6 0v-3l5-1z" fill="#e4c421" stroke="#8d7607" stroke-width=".8"/><path d="M5 12h5" stroke="#2e8b57" stroke-width="1.500"/></svg><span>Catalog</span></div>
      <div class="docktab search"><svg viewBox="0 0 16 16"><use href="#win"/><rect x="3" y="5" width="10" height="3" fill="#d5e2ee" stroke="#90a4b8" stroke-width=".7"/><circle cx="8.500" cy="12" r="3.600" fill="url(#globeFill)"/><path d="M7 9.500q3 1 2 5l-3-2z" fill="#5cbf4f"/></svg><span>Search</span></div>
    </aside>
  </div>
  <footer class="status">372493.751&nbsp; 312760.549 Meters</footer>
</main>

<div class="citrix"><svg viewBox="0 0 126 110"><path d="M22 43L11 55l11 12" fill="none" stroke="#a9adb0" stroke-width="2.600"/><circle cx="64" cy="55" r="25.500" fill="none" stroke="#dcdcdc" stroke-width="2.600"/><path d="M48 48q6 7 0 14M55 44q9 11 0 22M62 40q12 15 0 30M68 36q15 19 0 38" fill="none" stroke="#e2e2e2" stroke-width="3.600"/></svg></div>

<section class="window props">
  <div class="wtitle"><h3>Layer Properties</h3><span class="wclose"><svg width="22" height="19"><use href="#xmark"/></svg></span></div>
  <div class="wbody">
    <div class="tabs"><span>General</span><span>Source</span><span class="last">HTML Popup</span></div>
    <div class="panel">
      <div class="row label"><svg width="26" height="26"><use href="#check"/></svg>Label features in this layer</div>
      <div class="row method">Method:</div>
      <div class="row all">All features will be labeled</div>
      <fieldset class="f1"><legend>Text String</legend>Label &nbsp;Field:</fieldset>
      <fieldset class="f2"><legend>Text Symbol</legend><i></i></fieldset>
      <fieldset class="f3"><legend>Other Options</legend><i class="button"></i></fieldset>
    </div>
    <div class="pfoot"><span class="button">Apply</span></div>
  </div>
</section>

<section class="window selector">
  <div class="wtitle"><h3>Symbol Selector</h3><span class="wclose"><svg width="22" height="19"><use href="#xmark"/></svg></span></div>
  <div class="wbody">
    <div class="leftcol">
      <div class="searchrow">
        <div class="combo"><span>Type here to search</span><i class="stale"></i><svg><use href="#down"/></svg></div>
        <svg class="tool" viewBox="0 0 32 32"><circle cx="16" cy="16" r="14.500" fill="#cfe6f6" stroke="#9cc7e6" stroke-width="2"/><circle cx="14.500" cy="14" r="6" fill="#e9f5fc" stroke="#1c6fae" stroke-width="3"/><path d="M19 19l6 6" stroke="#1c6fae" stroke-width="4"/></svg>
        <svg class="tool" viewBox="0 0 32 32"><circle cx="17" cy="16" r="14" fill="#cfe6f6" stroke="#9cc7e6" stroke-width="2"/><circle cx="18" cy="12" r="6" fill="#e9f5fc" stroke="#1c6fae" stroke-width="3"/><path d="M22 17l5 7" stroke="#1c6fae" stroke-width="4"/><path d="M3 17l11 12M14 17L3 29" stroke="#c62828" stroke-width="4.500"/></svg>
        <svg class="tool views" viewBox="0 0 34 34"><g fill="#fff" stroke="#444" stroke-width="2.200"><rect x="4" y="2" width="8" height="9"/><rect x="22" y="2" width="8" height="9"/><rect x="4" y="20" width="8" height="9"/><rect x="22" y="20" width="8" height="9"/></g><path d="M1 14.500h14M19 14.500h14M1 32.500h14M19 32.500h14" stroke="#2d7fc1" stroke-width="2"/></svg>
        <i class="tri"></i>
      </div>
      <div class="radios"><span class="lbl">Search:</span><i class="radio on"></i><span class="allst">All Styles</span><i class="radio"></i><span class="refst">Referenced Styles</span></div>
      <div class="list">
        <div class="items">
          <div class="item"><em class="smp river">AaBbYyZz</em><span class="picked">River</span></div>
          <div class="item"><em class="smp stream">AaBbYyZz</em><span>Stream</span></div>
          <div class="item"><em class="smp big">AaBbYyZz</em><span>Map Title E-Size</span></div>
          <div class="item"><em class="smp big">AaBbYyZz</em><span>Map Title D-Size</span></div>
          <div class="item"><em class="smp big">AaBbYyZz</em></div>
        </div>
        <div class="lscroll"><i class="btn"><svg><use href="#chev"/></svg></i><i class="gap1"></i><i class="thumb"><svg width="15" height="18" viewBox="0 0 16 18"><path d="M0 2h16M0 8.500h16M0 15h16" stroke="#555" stroke-width="3"/></svg></i><i class="gap2"></i><i class="btn"><svg class="dn"><use href="#chev"/></svg></i></div>
      </div>
    </div>
    <div class="rightcol">
      <fieldset>
        <legend>Current Symbol</legend>
        <em class="current">AaBbYyZz</em>
        <div class="frow color"><label>Color:</label><div class="swatchbtn"><i></i><b></b><u class="tri"></u></div></div>
        <div class="combo font"><svg class="fonticon" viewBox="0 0 26 30"><path d="M1 1h18l6 6v22H1z" fill="#cfe2f7" stroke="#6d95c8" stroke-width="1.500"/><text x="4" y="24" class="oglyph">O</text></svg><span>Times New Roman</span><svg class="dd"><use href="#down"/></svg></div>
        <div class="frow size"><label>Size:</label><div class="combo"><span>8</span><svg class="dd"><use href="#down"/></svg></div></div>
        <div class="frow style"><label>Style:</label><b>B</b><b class="on"><em>I</em></b><b><u>U</u></b><b><s>ST</s></b></div>
        <span class="button edit">Edit Symbol...</span>
        <div class="pair"><span class="button save">Save As...</span><span class="button reset">Reset</span></div>
      </fieldset>
      <span class="button refs">Style References...</span>
      <div class="pair ok"><span class="button primary">OK</span><span class="button">Cancel</span></div>
    </div>
  </div>
  <svg class="grab" width="16" height="16" viewBox="0 0 16 16"><path d="M13 1h2v2h-2zM8 7h2v2H8zM13 7h2v2h-2zM2 13h2v2H2zM8 13h2v2H8zM13 13h2v2h-2z" fill="#b5b5b5"/></svg>
</section>
<script src="map.js"></script>
</body>
</html>
```
FILE: styles.css
```css
* { box-sizing: border-box; }
body { margin: 0; width: 2880px; height: 1800px; overflow: hidden; position: relative; background: #f0eef0; color: #1b1b1b; font-family: "Open Sans", "Noto Sans", sans-serif; }
h1, h2, h3 { margin: 0; font-weight: 400; }
i, em { font-style: normal; }
.defs { position: absolute; }
svg { flex: none; display: block; }

/* browser frame */
.chrome { height: 190px; font-family: "Liberation Sans", Arial, sans-serif; color: #000; }
.tabstrip { height: 73px; background: linear-gradient(#ababab, #a6a6a6); display: flex; align-items: flex-start; border-bottom: 1px solid #8a8a8a; }
.lights { display: flex; gap: 16px; padding: 26px 17px 0 24px; }
.lights i { width: 24px; height: 24px; border-radius: 50%; }
.lights .red { background: #fc5b57; border: 1px solid #e2463f; }
.lights .gray { background: #d3d3d3; border: 1px solid #c4c4c4; }
.lights .green { background: #34c84a; border: 1px solid #27aa35; }
.tab { position: relative; margin-top: 23px; height: 50px; display: flex; align-items: center; font-size: 24px; }
.tab > * { position: relative; }
.tab .tabshape { position: absolute; left: 0; top: 0; width: 100%; height: 50px; }
.tab .fav { width: 30px; height: 30px; }
.tab .name { margin-left: 5px; flex: 1; line-height: 48px; letter-spacing: -.1px; }
.tab .x { width: 14px; height: 14px; }
.tab.back { width: 394px; padding: 0 13px 0 34px; }
.tab.front { width: 415px; padding: 0 35px 0 32px; margin-left: -2px; z-index: 2; height: 51px; }
.newtab { width: 64px; height: 33px; margin: 32px 0 0 -8px; }
.person { width: 54px; height: 54px; margin: 11px 9px 0 auto; }
.addressbar { height: 62px; background: linear-gradient(#ebebeb, #e0e0e0); display: flex; align-items: center; padding: 6px 20px 0 20px; }
.nav { width: 31px; height: 30px; margin-right: 24px; }
.nav.reload { margin-right: 21px; width: 31px; }
.addressbar .fwd { margin-right: 27px; }
.url { width: 2494px; height: 55px; border: 2px solid #a3a3a3; border-radius: 6px; background: #fff; display: flex; align-items: center; padding: 0 6px 0 12px; }
.lock { width: 22px; height: 30px; margin-right: 16px; }
.addr { flex: 1; font-size: 28px; letter-spacing: .86px; line-height: 51px; padding-top: 1px; color: #666; white-space: nowrap; }
.addr b { font-weight: 400; }
.sec { color: #0b9a1d; }
.host { color: #000; }
.star { width: 36px; height: 34px; }
.ext.ever { width: 27px; height: 30px; margin-left: 24px; }
.ext.cast { width: 38px; height: 30px; margin-left: 32px; }
.ext.menu { width: 30px; height: 28px; margin-left: 30px; }
.bookmarks { height: 55px; background: linear-gradient(#dfdfdf, #d3d3d3); border-bottom: 2px solid #848484; padding: 0 15px; display: grid; grid-template-columns: 154px 214px 302px 300px 130px 140px 128px 274px 282px 166px 303px 442px 20px; align-items: center; font-size: 24px; letter-spacing: .25px; }
.bookmarks a { display: flex; align-items: center; gap: 11px; white-space: nowrap; line-height: 44px; }
.bookmarks a svg { width: 32px; height: 30px; }
.bookmarks a svg.full { height: 32px; }
.bookmarks .fade { width: 230px; overflow: hidden; -webkit-mask-image: linear-gradient(90deg, #000 74%, transparent); mask-image: linear-gradient(90deg, #000 74%, transparent); }
.bcit { font: bold 14px "Liberation Sans", sans-serif; fill: #fff; }
.more { font-weight: 400; font-size: 28px; line-height: 40px; color: #444; padding-bottom: 6px; }

/* ArcMap frame */
.titlebar { height: 47px; background: #cecccd; display: flex; justify-content: space-between; }
.appicon { width: 34px; height: 34px; margin: 6px 0 0 3px; }
.titlebar h1 { font-size: 28px; line-height: 46px; width: 273px; margin-left: 1265px; white-space: nowrap; letter-spacing: .4px; }
.winbtns { display: flex; margin: 0 3px 0 auto; height: 40px; border: 2px solid #7c7c7c; border-top: 0; }
.winbtns span { width: 56px; display: flex; align-items: center; justify-content: center; border-right: 2px solid #7c7c7c; }
.winbtns span + span { width: 52px; }
.winbtns span:last-child { width: 92px; border: 0; }
.menubar { height: 51px; background: linear-gradient(90deg, #f0eff2, #f6f4f8 60%, #fcfbfd); display: grid; grid-template-columns: 68px 72px 83px 150px 90px 128px 187px 146px 128px 80px; padding-left: 24px; font-size: 22.500px; line-height: 50px; letter-spacing: -.05px; }
.toolbar { background: linear-gradient(90deg, #f0eff2, #f6f4f8 60%, #fcfbfd); display: flex; align-items: center; }
.toolbar.one { height: 51px; padding: 0 0 4px 13px; }
.toolbar.two { height: 51px; padding: 0 0 2px 13px; }
.toolbar > svg { width: 44px; height: 31px; }
.toolbar > svg.on { height: 44px; padding: 6px 0; background: #d9eafb; border: 2px solid #5fa8e8; }
.grip { width: 4px; height: 36px; margin-right: 3px; background: repeating-linear-gradient(#b5b5b5 0 3px, transparent 3px 7px); }
.toolbar .sep { width: 2px; height: 30px; margin: 0 4.900px; background: #c3c3c6; }
.toolbar.two .sep { margin: 0 5.150px; }
.tri { width: 0; height: 0; border: 7px solid transparent; border-top: 8px solid #222; border-bottom: 0; }
.toolbar .tri { margin: 2px 5px 0 5px; border-width: 8px 6px 0; }
.combo { border: 2px solid #848484; background: #fff; display: flex; align-items: center; justify-content: space-between; }
.combo svg { width: 17px; height: 12px; }
.scale { width: 296px; height: 42px; padding: 0 8px 4px 6px; font-size: 22.500px; letter-spacing: -.75px; }
.overflow { width: 22px; height: 46px; margin: 4px 0 0 5px; background: linear-gradient(#f3f2f4, #aaa); display: flex; flex-direction: column; align-items: center; justify-content: flex-end; gap: 3px; padding-bottom: 6px; }
.two .overflow { margin-left: 4px; }
.overflow::before { content: ""; width: 11px; height: 3px; background: #111; }
.overflow::after { content: ""; border: 6px solid transparent; border-top: 7px solid #111; border-bottom: 0; }
.xy { font: bold 8px "Liberation Sans", sans-serif; fill: #2566a8; }

.workspace { height: 1368px; display: grid; grid-template-columns: 400px 9px 2391px 2px 33px 1fr; background: #f0eef0; }
.toc { grid-column: 1; display: flex; flex-direction: column; padding-right: 3px; }
.tochead { height: 49px; margin-right: -3px; background: linear-gradient(90deg, #98b2d0, #b8cfea); display: flex; align-items: center; padding: 0 9px 0 9px; }
.tochead h2 { flex: 1; font-size: 28px; line-height: 50px; letter-spacing: .2px; padding-top: 2px; }
.tochead svg + svg { margin-left: 14px; }
.toctools { height: 53px; display: flex; align-items: center; padding-left: 8px; background: linear-gradient(#fafafa, #f0eef0); }
.toctools span { width: 44px; height: 44px; display: grid; place-items: center; }
.toctools span.on { background: #d9eafb; border: 2px solid #5fa8e8; }
.toctools svg { width: 32px; height: 32px; }
.toctools .sep { width: 2px; height: 28px; background: #bdbdbd; margin: 0 5px; }
.tree { height: 1264px; border: 2px solid #828790; background: #fff; display: flex; flex-direction: column; padding: 2px 3px 3px; }
.tree ul { list-style: none; margin: 0; padding: 0; flex: 1; overflow: hidden; font-size: 22.500px; }
.tree li { height: 36.020px; display: flex; align-items: center; padding-left: 51px; white-space: nowrap; line-height: 33px; }
.tree li.root { padding-left: 12px; letter-spacing: -.1px; }
.pm { width: 19px; height: 19px; margin: 3px 14px 0 0; }
.cb { width: 24px; height: 24px; margin-right: 11px; }
.tree li span { padding: 0 5px; height: 36px; }
.stack { width: 32px; height: 26px; margin: 0 10px 0 -2px; }
.tree .sym { padding-left: 115px; }
.tree .sym.ship { height: 72px; padding: 14px 0 0 105px; }
.tree .heading { padding-left: 156px; }
.sel { background: #3399ff; color: #fff; }
.sw { width: 29px; height: 20px; flex: none; }
.sym .sw + span { padding-left: 8px; padding-right: 0; letter-spacing: 0; }
.lake { background: #7ab6f5; }
.coral { background: #f57a7a; height: 23px; width: 32px; margin-left: -2px; clip-path: polygon(10% 0, 100% 0, 100% 100%, 0 100%, 0 14%); }
.fee { background: #ffff73; }
.nofee { background: #74b374; }
.county { border: 2px solid #e2e2e2; }
.southeast { background: #a3ff73; border: 2px solid #c4c4c4; }
.line { width: 29px; height: 4px; }
.route { background: #b5282d; height: 5px; }
.line.river { background: #a3c3de; height: 3px; }
.btn { background: #fff; border: 2px solid #bdbdbd; display: grid; place-items: center; flex: none; }
.btn svg { width: 16px; height: 16px; }
.left { transform: rotate(-90deg); }
.right { transform: rotate(90deg); }
.dn { transform: rotate(180deg); }
.thumb { background: #dcdcdc; border: 2px solid #b0b0b0; display: grid; place-items: center; }
.hscroll { height: 34px; display: flex; }
.hscroll .btn { width: 33px; }
.hscroll .thumb { width: 293px; }
.hscroll .track { flex: 1; border: 2px solid #d4d4d4; border-width: 2px 0; }
.mapcol { grid-column: 3; border: 2px solid #7b7b7b; border-width: 4px 0 0 2px; display: flex; flex-direction: column; }
.map { width: 2389px; height: 1329px; border-bottom: 2px solid #fff; }
.city { font: 20px "Liberation Sans", sans-serif; fill: #222; }
.mapfoot { height: 32px; display: flex; background: #f0eef0; }
.view { width: 34px; display: grid; place-items: center; }
.view svg { width: 18px; height: 18px; }
.view.on { background: #d6eafb; border: 2px solid #3fa5e0; }
.view.wide { border-left: 2px solid #b5b5b5; margin-left: 2px; padding-left: 15px; width: 48px; }
.mapfoot .btn { width: 32px; }
.mapfoot .view + .btn { margin-left: 2px; }
.mapfoot .thumb { flex: 1; }
.vscroll { grid-column: 5; display: flex; flex-direction: column; height: 1331px; border-top: 3px solid #7b7b7b; border-right: 2px solid #a6a6a6; }
.vscroll .btn { height: 34px; }
.vscroll .thumb { flex: 1; margin-bottom: 3px; }
.dock { grid-column: 6; background: #fcfbfd; padding: 4px 0 0 6px; }
.docktab { height: 143px; border: 2px solid #a2a2a2; border-right: 0; border-radius: 8px 0 0 8px; background: #f0eef0; padding: 7px 0 0 2px; }
.docktab.search { height: 135px; }
.docktab svg { width: 33px; height: 33px; }
.docktab span { writing-mode: vertical-rl; font: 23px "Liberation Sans", sans-serif; color: #777; margin: 8px 0 0 2px; line-height: 28px; letter-spacing: .75px; }
.status { height: 42px; background: #f0eef0; padding-left: 2374px; font-size: 22.500px; line-height: 41px; letter-spacing: -.6px; }

/* floating session tab */
.citrix { position: absolute; left: 2746px; top: 767px; width: 127px; height: 110px; background: rgba(25, 25, 25, .54); border: 1px solid rgba(120, 120, 120, .5); }
.citrix svg { width: 126px; height: 110px; }

/* floating windows */
.window { position: absolute; font-family: "DejaVu Sans Condensed", "DejaVu Sans", sans-serif; font-stretch: condensed; font-size: 20.500px; }
.wtitle { position: relative; display: flex; justify-content: center; font-family: "Open Sans", sans-serif; font-stretch: normal; }
.wtitle h3 { font-size: 28px; letter-spacing: .1px; white-space: nowrap; }
.wclose { position: absolute; right: -4px; top: 0; width: 68px; height: 42px; border: 2px solid #777; border-top: 0; display: grid; place-items: center; }
.wbody { background: #f0eef1; }
.button { background: #dcdcdc; border: 2px solid #8a8a8a; display: flex; align-items: center; justify-content: center; height: 42px; white-space: nowrap; }
fieldset { border: 2px solid #dbe2e8; border-radius: 5px; margin: 0; padding: 0; min-width: 0; }
legend { padding: 0 7px; margin-left: 9px; line-height: 24px; }
.props { left: 770px; top: 466px; width: 1340px; height: 1059px; background: #cecccd; border: 2px solid #7b7b7b; padding: 0 13px; }
.props .wtitle { height: 59px; }
.props .wtitle h3 { line-height: 56px; }
.props .wbody { height: 982px; border-top: 1px solid #bbb; }
.tabs { display: flex; padding: 18px 25px 0 18px; }
.tabs span { height: 37px; border: 2px solid #989898; border-bottom: 0; padding: 0 8px; line-height: 35px; background: #ecebee; letter-spacing: .25px; }
.tabs span + span { border-left-width: 1px; }
.tabs .last { margin-left: auto; padding-right: 10px; letter-spacing: 0; }
.panel { margin: 0 12px 0 14px; height: 853px; background: #fff; border: 2px solid #a3a3a3; padding-top: 19px; }
.row { height: 27px; line-height: 27px; white-space: nowrap; }
.row.label { display: flex; gap: 7px; padding-left: 27px; }
.row.method { padding-left: 27px; margin-top: 24px; }
.row.all { padding-left: 45px; margin-top: 71px; letter-spacing: -.2px; }
.panel fieldset { margin-left: 46px; width: 900px; }
.panel .f1 { margin-top: 52px; height: 88px; padding: 13px 0 0 11px; }
.f1 legend, .f2 legend { margin-left: -1px; }
.panel .f2 { margin-top: 16px; height: 148px; padding: 13px 0 0 10px; }
.f2 i { display: block; background: #f0eef1; height: 100px; }
.panel .f3 { margin-top: 14px; height: 108px; padding: 17px 0 0 18px; }
.f3 legend { margin-left: -10px; }
.pfoot { padding: 17px 14px 0 0; }
.pfoot .button { width: 144px; margin-left: auto; padding-right: 4px; }

.selector { left: 918px; top: 494px; width: 1047px; height: 1002px; background: #9e9e9e; border: 2px solid #4d4d4d; padding: 0 14px; }
.selector .wtitle { height: 60px; }
.selector .wtitle h3 { line-height: 57px; letter-spacing: .5px; }
.selector .wclose { background: #c4594f; border-color: #7a3832; }
.selector .wbody { height: 925px; display: grid; grid-template-columns: 622px 326px; column-gap: 23px; padding-left: 22px; }
.leftcol { padding-top: 23px; }
.searchrow { height: 41px; display: flex; align-items: center; }
.searchrow .combo { width: 455px; height: 41px; padding: 0 7px 2px 9px; color: #777; letter-spacing: .05px; }
.stale { width: 206px; height: 30px; background: #f2f0f3; margin-left: -14px; }
.searchrow .combo svg { width: 17px; }
.tool { width: 32px; height: 32px; margin-left: 15px; }
.views { width: 34px; height: 34px; }
.searchrow .tri { margin-left: 14px; }
.radios { height: 62px; display: flex; align-items: center; white-space: nowrap; }
.radios .lbl { width: 127px; margin-top: -4px; }
.radio { width: 24px; height: 24px; border-radius: 50%; border: 2px solid #777; background: #fff; margin-top: -4px; }
.radio.on { box-shadow: inset 0 0 0 4px #fff; background: #222; }
.radios .allst { width: 203px; padding-left: 8px; letter-spacing: -.15px; }
.radios .refst { padding-left: 7px; letter-spacing: .5px; }
.list { height: 774px; background: #fff; border: 2px solid #8a8a8a; display: flex; padding: 2px 2px 2px 0; }
.items { flex: 1; overflow: hidden; padding: 0 0 0 30px; }
.item { width: 340px; height: 160px; display: grid; grid-template-rows: 118px 42px; justify-items: center; align-items: center; letter-spacing: .1px; }
.item > span { height: 30px; line-height: 29px; padding: 0 2px; }
.items .item:first-child { margin-top: 8px; }
.picked { background: #3399ff; color: #fff; outline: 1px dotted #c07a3a; letter-spacing: .6px; }
.smp { padding-top: 36px; margin-left: -13px; }
.smp.river, .smp.stream, .current { font-family: "Liberation Serif", "Times New Roman", serif; font-style: italic; font-weight: 700; color: #1f83f5; }
.smp.river { font-size: 20px; }
.smp.stream { font-size: 15px; padding-top: 34px; color: #2f8af7; }
.smp.big { font-family: "Liberation Sans", Arial, sans-serif; font-size: 44.500px; color: #000; letter-spacing: .4px; line-height: 50px; padding-top: 38px; }
.lscroll { width: 34px; display: flex; flex-direction: column; border-left: 1px solid #bbb; border-right: 1px solid #bbb; }
.lscroll .btn { height: 34px; }
.gap1 { height: 242px; }
.gap2 { flex: 1; }
.lscroll .thumb { height: 82px; }
.rightcol { padding-top: 24px; }
.rightcol fieldset { height: 698px; border-color: #fafafa; outline: 0; }
.rightcol legend { letter-spacing: .2px; margin-left: 8px; }
.current { display: block; font-weight: 400; font-size: 21px; text-align: center; line-height: 24px; margin: 83px 22px 0 0; letter-spacing: .3px; -webkit-text-stroke: .3px #1f83f5; }
.frow { display: flex; align-items: center; padding-left: 18px; }
.frow label { width: 92px; letter-spacing: -.1px; }
.color { margin-top: 119px; height: 48px; }
.swatchbtn { width: 74px; height: 48px; border: 2px solid #8a8a8a; background: #dcdcdc; display: flex; align-items: center; padding-left: 5px; }
.swatchbtn i { width: 39px; height: 35px; background: #005ee8; border: 1px solid #999; }
.swatchbtn b { width: 2px; height: 34px; background: #aaa; margin: 0 5px 0 7px; }
.swatchbtn .tri { border-width: 6px 5px 0; }
.combo.font { width: 293px; height: 43px; margin: 21px 0 0 18px; padding: 0 8px 0 6px; letter-spacing: .1px; }
.combo.font .fonticon { width: 26px; height: 30px; }
.font span { flex: 1; padding-left: 8px; }
.oglyph { font: italic bold 25px "Liberation Serif", serif; fill: #17602c; }
.size { margin-top: 23px; height: 43px; }
.size label { width: 91px; }
.size .combo { width: 150px; height: 43px; padding: 0 8px; }
.style { margin-top: 21px; height: 49px; }
.style label { width: 89px; padding-top: 7px; }
.style b { width: 48px; height: 49px; display: grid; place-items: center; margin-right: 3px; font: bold 26px/30px "Liberation Serif", serif; font-stretch: normal; color: #000; }
.style b em { font-style: italic; }
.style b.on { background: #d9eafb; border: 2px solid #3fa9e0; width: 47px; }
.style b:last-child { font-size: 23px; letter-spacing: -1.500px; margin-left: 2px; }
.edit { width: 189px; margin: 84px 0 0 69px; padding-right: 4px; }
.pair { display: flex; gap: 13px; margin: 16px 0 0 9px; }
.save { width: 145px; padding-right: 6px; }
.reset { width: 146px; padding-right: 4px; }
.refs { margin-top: 75px; width: 325px; }
.pair.ok { margin: 18px 0 0; gap: 31px; }
.ok .button { width: 147px; padding-right: 4px; }
.ok .primary { background: #bee6fd; border-color: #3c7fb1; }
.grab { position: absolute; right: 19px; bottom: 18px; }
```
FILE: map.js
```js
// Draws the bathymetry contours and the reef texture of the map view.
const NS = 'http://www.w3.org/2000/svg';
const contours = document.getElementById('contours');
const speckles = document.getElementById('speckles');

let seed = 7;
function rnd() { seed = (seed * 16807) % 2147483647; return seed / 2147483647; }
function pts(s) { return s.split(' ').map(p => p.split(',').map(Number)); }

function smooth(p) {
  let d = `M${p[0][0]} ${p[0][1]}`;
  for (let i = 0; i < p.length - 1; i++) {
    const a = p[i - 1] || p[i], b = p[i], c = p[i + 1], e = p[i + 2] || c;
    const f = v => v.toFixed(1);
    d += `C${f(b[0] + (c[0] - a[0]) / 8)} ${f(b[1] + (c[1] - a[1]) / 8)} ${f(c[0] - (e[0] - b[0]) / 8)} ${f(c[1] - (e[1] - b[1]) / 8)} ${f(c[0])} ${f(c[1])}`;
  }
  return d;
}
function add(parent, tag, attrs) {
  const el = document.createElementNS(NS, tag);
  for (const k in attrs) el.setAttribute(k, attrs[k]);
  parent.appendChild(el);
}
// Splits every segment and nudges the midpoint, so that long lines wander.
function rough(p, amount) {
  const out = [p[0]];
  for (let i = 1; i < p.length; i++) {
    const a = p[i - 1], b = p[i], n = Math.max(1, Math.round(Math.hypot(b[0] - a[0], b[1] - a[1]) / 16));
    for (let k = 1; k < n; k++) out.push([a[0] + (b[0] - a[0]) * k / n + (rnd() - .5) * amount, a[1] + (b[1] - a[1]) * k / n + (rnd() - .5) * amount]);
    out.push(b);
  }
  return out;
}
function line(s, color, width = 2, amount = 2) {
  add(contours, 'path', { d: smooth(rough(pts(s), amount)), stroke: color, 'stroke-width': width });
}
function mix(a, b, t) { return `rgb(${a.map((v, i) => Math.round(v + (b[i] - v) * t)).join(',')})`; }
// Interpolates n lines between two guide lines with the same number of points.
function bundle(from, to, n, ca, cb, power = 1, width = 1.8) {
  const a = pts(from), b = pts(to);
  for (let k = 0; k <= n; k++) {
    const t = Math.pow(k / n, power);
    const p = a.map((q, i) => [q[0] + (b[i][0] - q[0]) * t + (rnd() - .5) * 3, q[1] + (b[i][1] - q[1]) * t + (rnd() - .5) * 3]);
    add(contours, 'path', { d: smooth(rough(p, 2)), stroke: mix(ca, cb, k / n), 'stroke-width': width });
  }
}

const pale = '#c0c4f5', violet = '#a7a3ef', mid = '#8079e2', dark = '#5c55d0';
const V = [167, 163, 239], D = [92, 86, 205], P = [197, 198, 250];

// shelf lines west of the coast
[
  '418,418 480,479 508,541 513,648 513,705 528,763 543,820 550,881 546,912 571,925 592,977 612,1067 620,1164 606,1228 607,1347 633,1416 679,1508 714,1556 755,1588 800,1612',
  '441,395 480,445 526,495 545,541 543,590 551,640 561,686 579,720 592,724 592,782 625,812 630,858 650,916 679,954 699,1057 709,1121 712,1191 704,1261 689,1357 684,1416 691,1465 679,1467 658,1433 668,1476 694,1529 740,1578 800,1618',
  '474,395 541,456 582,514 607,579 630,648 658,717 689,778 699,858 735,912 765,946 772,985',
  '482,395 546,456 586,514 613,579 637,648 672,717 697,778 707,858 740,912 772,960',
  '508,395 551,430 559,460 582,462 602,502 633,571 651,648 679,665 694,705 696,732 719,747 730,793 755,850 770,874',
  '556,395 587,430 612,479 638,545 663,610 684,638 687,610 682,606 683,622 704,640 709,679 735,705 750,763 770,800',
  '600,395 607,414 620,407 638,445 653,495 668,510 666,564 673,571 689,529 704,533 724,587 735,640 760,648 770,686',
  '645,395 663,430 686,479 704,468 730,483 760,514 770,552',
  '682,500 686,479', '765,395 786,418 796,449 806,466', '841,394 852,415 868,430 874,457 890,466', '956,394 964,430 970,466'
].forEach(s => line(s, pale, 1.8, 4));

bundle('120,650 210,720 285,780 335,830 372,880 396,930 410,977 418,1040 424,1148 420,1215 444,1290 482,1400 500,1500 545,1560 570,1610 590,1650 608,1680 630,1721',
  '405,600 434,686 446,747 454,801 474,858 480,916 492,977 505,1040 531,1148 556,1255 577,1325 612,1422 656,1521 714,1572 780,1612 837,1649 886,1693 940,1721', 15, D, V, 1.3, 1.7);
line('411,1299 421,1299 449,1341 451,1373 473,1403 477,1449 482,1486 524,1521 551,1561 561,1615 587,1655 610,1674 630,1721', dark, 1.8);
line('411,1122 430,1140 428,1190 417,1230 424,1280 450,1310 462,1370 490,1420 492,1470 530,1510 570,1570 585,1630 620,1670 650,1721', dark, 1.8);
line('411,1685 444,1674 451,1658 447,1637 480,1610 524,1583 528,1604 551,1637 556,1661 579,1677 605,1721', dark, 1.8);

// lines hugging the reef
bundle('740,1566 800,1604 868,1645 930,1672 990,1694 1080,1704 1180,1708 1260,1700', '750,1590 800,1618 868,1668 930,1705 990,1735 1080,1735 1180,1724 1270,1704', 8, P, P, 1, 2.2);
bundle('1200,1706 1330,1708 1400,1706 1480,1691 1560,1671', '1150,1735 1330,1716 1420,1712 1500,1696 1570,1674', 4, P, P, 1, 2);
bundle('1225,1690 1262,1688 1300,1684', '1225,1702 1262,1700 1300,1698', 5, P, P, 1, 2.4);
[
  '1043,1525 1035,1560 1024,1597 1006,1625 1010,1660 1030,1690', '1124,1525 1090,1560 1050,1590 1020,1606 1000,1640 1005,1670',
  '1212,1525 1200,1560 1190,1575 1160,1596 1130,1600 1090,1605 1050,1600', '1353,1525 1345,1560 1325,1588 1270,1596 1210,1610 1200,1622 1180,1618 1160,1650 1135,1668 1133,1690 1153,1702 1162,1690 1185,1708 1190,1682 1200,1684 1198,1705',
  '1506,1525 1497,1560 1460,1576 1430,1605 1410,1615', '1540,1525 1530,1560 1500,1585 1470,1590',
  '1864,1525 1890,1545 1850,1600 1830,1590 1840,1612 1790,1625 1790,1645 1760,1652 1740,1675 1700,1665 1690,1700 1670,1685 1660,1712 1590,1712 1560,1721',
  '1880,1540 1800,1597 1700,1640 1600,1680 1500,1706 1400,1721', '1878,1525 1800,1590 1700,1630 1590,1672 1500,1695 1380,1712',
  '1020,1622 1030,1630 1025,1645 1014,1640 1014,1625 1020,1622', '870,1608 884,1620 882,1638 868,1642 852,1628 856,1612 870,1608', '790,1525 776,1550 776,1575 800,1600', '800,1525 784,1552 780,1570 830,1610',
  '1212,1655 1215,1630 1240,1628 1258,1640 1250,1660 1225,1664 1212,1655', '1265,1660 1270,1632 1300,1630 1340,1640 1345,1665 1320,1680 1290,1665 1265,1660'
].forEach(s => line(s, pale, 2, 4));

// open water east of the peninsula
[
  '2218,395 2248,436 2279,469 2304,487 2348,510 2432,574 2478,594 2539,638 2616,668 2692,701 2743,732 2798,791',
  '2111,566 2128,556 2141,533 2169,502 2200,492 2233,508 2315,548 2432,610 2488,630 2565,668 2631,696 2702,722 2743,750 2798,802',
  '2798,812 2733,755 2692,737 2621,714 2560,686 2488,655 2417,630 2350,602 2279,579 2228,576 2202,599 2197,645 2198,727 2218,788 2243,849 2253,906 2274,941 2315,964 2340,987 2376,997 2407,979 2447,949 2478,931 2554,918 2606,926 2641,944 2677,979 2743,1048 2798,1092',
  '2455,395 2450,431 2455,492 2478,533 2514,574 2549,604 2595,630 2657,658 2708,689 2743,712 2798,765',
  '2798,1100 2743,1056 2641,957 2600,939 2554,933 2478,944 2437,967 2407,1002 2384,1018 2379,1048 2407,1079 2447,1107 2519,1129 2595,1140 2657,1161 2700,1185',
  '2798,1108 2743,1064 2636,967 2590,947 2554,946 2483,957 2442,985 2422,1018 2424,1048 2447,1074 2498,1097 2560,1110 2621,1135 2680,1160 2710,1185',
  '2798,1116 2743,1072 2636,977 2585,963 2544,979 2534,1013 2514,1043 2539,1069 2575,1097 2621,1125 2685,1150 2715,1180',
  '2190,1257 2192,1190 2195,1100 2200,1084 2218,1051 2251,1037 2279,1043 2330,1079 2386,1104 2437,1135 2504,1153 2595,1157',
  '2190,1257 2202,1301 2218,1333 2233,1404 2237,1467 2237,1539 2229,1606 2233,1721',
  '2111,1002 2118,991 2144,1040 2151,1100 2164,1158 2171,1252 2192,1315 2213,1369 2220,1440 2219,1557 2205,1619 2199,1721',
  '2111,1243 2125,1230 2154,1279 2182,1355 2191,1422 2190,1516 2164,1579 2146,1610 2105,1648 2064,1675 2011,1688 1949,1721',
  '2038,1525 1993,1611 1930,1660 1841,1721', '2002,1525 1957,1592 1900,1640 1860,1690 1806,1721', '1949,1525 1886,1601 1830,1670 1782,1700 1743,1721',
  '2167,466 2168,394', '2060,466 2056,430 2060,394', '1996,394 2000,440 2010,466'
].forEach(s => line(s, violet, 1.800, 1.200));
[ '1818,394 1822,415 1845,432 1860,466', '1850,394 1880,440 1890,466', '1940,394 1960,440 1964,466' ].forEach(s => line(s, pale, 2, 4));
[
  '2798,592 2779,559 2766,528 2766,508 2756,487 2741,478 2715,485 2687,500 2639,541 2638,569 2687,615 2733,681 2784,740 2798,746',
  '2798,658 2774,633 2753,656 2764,686 2779,712 2798,723',
  '2798,1133 2692,1064 2651,1013 2616,987 2585,981 2567,1008 2567,1048 2585,1084 2621,1115 2682,1145 2720,1180',
  '2798,1141 2700,1076 2641,1023 2611,1002 2590,1013 2592,1046 2611,1084 2641,1110 2687,1135 2725,1175',
  '2798,1150 2730,1100 2690,1085 2676,1072 2660,1078 2642,1064 2640,1070 2654,1082 2650,1094 2682,1110 2700,1135 2735,1180',
  '2798,1158 2760,1125 2725,1112 2708,1120 2716,1140 2745,1190', '2798,1166 2765,1136 2738,1132 2728,1148 2745,1180 2755,1200'
].forEach(s => line(s, mid, 2, 1.200));
bundle('2741,1060 2770,1084 2798,1112', '2720,1075 2762,1110 2798,1162', 5, V, D);
bundle('2595,1157 2677,1181 2702,1203 2723,1243 2720,1270 2687,1297 2641,1306 2606,1306 2590,1328 2606,1369 2636,1413 2657,1476 2682,1521 2723,1566 2736,1606 2738,1664 2769,1721',
  '2690,1135 2735,1175 2762,1205 2785,1240 2783,1270 2755,1310 2710,1342 2670,1350 2655,1358 2668,1400 2680,1440 2700,1490 2725,1535 2757,1575 2765,1620 2775,1680 2805,1712', 8, V, D, 1, 1.9);
bundle('2798,1375 2745,1392 2715,1420 2712,1446 2706,1500 2722,1540', '2798,1420 2764,1435 2761,1472 2775,1495 2798,1527 2815,1550', 6, D, V, 1, 1.9);
[
  '2798,1184 2770,1160 2750,1143 2746,1170 2770,1210 2782,1250 2770,1290 2740,1330 2700,1352 2684,1375 2690,1410 2713,1440 2716,1420 2735,1395 2798,1372',
  '2798,1199 2784,1198 2779,1182 2776,1205 2792,1220 2795,1260 2780,1300 2750,1330 2715,1350 2699,1380 2711,1407 2735,1390 2798,1366',
  '2798,1288 2775,1320 2750,1345 2738,1352 2750,1361 2798,1360', '2798,1309 2782,1318 2780,1340 2785,1349 2798,1350',
  '2690,1440 2700,1470 2715,1500 2720,1480 2740,1520 2755,1530 2745,1541 2725,1525',
  '2798,1592 2779,1570 2767,1546 2765,1570 2772,1630 2780,1665 2798,1680', '2740,1545 2757,1570 2765,1610 2770,1670 2798,1700'
].forEach(s => line(s, dark, 2, 1.200));

// reef and island texture: short strokes scattered round a centre line
function scatter(s, spread, count, colors, min, max) {
  const p = pts(s);
  for (let i = 0; i < count; i++) {
    const u = rnd() * (p.length - 1), k = Math.floor(u), f = u - k;
    const j = () => (rnd() + rnd() - 1) * spread;
    const x = p[k][0] + (p[k + 1][0] - p[k][0]) * f + j(), y = p[k][1] + (p[k + 1][1] - p[k][1]) * f + j();
    const w = min + rnd() * (max - min);
    add(speckles, 'path', { d: `M${x.toFixed(1)} ${y.toFixed(1)}l${(w * (rnd() + .3)).toFixed(1)} ${(-w * rnd()).toFixed(1)}l${(w * (rnd() - .5)).toFixed(1)} ${(w * .5).toFixed(1)}z`, fill: colors[i % colors.length], stroke: colors[i % colors.length], 'stroke-width': 1.5 });
  }
}
const lilac = ['#c9c8fb'], sand = ['#dfe0e4'], reef = ['#f47b7b'];
scatter('1225,1645 1300,1645 1400,1650', 36, 480, lilac, 2, 6);
scatter('1340,1670 1400,1665 1460,1655', 30, 260, lilac, 3, 9);
scatter('1430,1625 1490,1600 1560,1570', 44, 620, lilac, 3, 9);
scatter('1550,1530 1570,1570 1600,1610', 44, 300, lilac, 3, 9);
scatter('1460,1655 1560,1620 1680,1600', 34, 360, lilac, 3, 9);
scatter('1680,1550 1720,1530 1770,1560', 38, 240, lilac, 3, 8);
scatter('1222,1616 1250,1611', 8, 60, lilac, 3, 8);
scatter('1022,1650 1045,1625 1095,1620 1100,1600', 17, 60, lilac, 2, 5);
scatter('1028,394 1050,430 1035,466', 22, 110, lilac, 3, 8);
scatter('1455,1635 1480,1610 1520,1590', 24, 120, sand, 3, 7);
scatter('1520,1570 1560,1600 1590,1600', 26, 110, sand, 3, 7);
scatter('1310,1650 1324,1645', 12, 20, sand, 2, 5);
scatter('1050,1652 1060,1640 1078,1620', 9, 130, reef, 4, 9);
scatter('1096,1605 1100,1618 1098,1628', 9, 60, reef, 4, 9);
scatter('1440,1676 1465,1665 1500,1655', 9, 130, reef, 4, 9);
scatter('1500,1655 1530,1645 1560,1630', 8, 60, reef, 3, 8);
scatter('1330,1683 1350,1680 1360,1680', 6, 22, reef, 3, 7);
scatter('1375,1688 1395,1682 1412,1677', 8, 40, reef, 4, 9);
scatter('1550,1640 1600,1622', 7, 18, reef, 3, 7);
scatter('1655,1602 1690,1590 1700,1572', 7, 26, reef, 3, 8);
scatter('1450,1648 1462,1644', 4, 10, ['#a3ff73'], 3, 6);
scatter('1550,1592 1562,1606', 4, 12, ['#a3ff73'], 3, 6);
```
